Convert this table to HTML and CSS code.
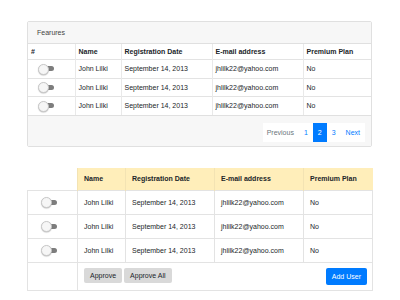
FILE: index.html
```html
<!DOCTYPE html>
<html lang="en">
  <head>
    <meta charset="UTF-8" />
    <meta name="viewport" content="width=device-width, initial-scale=1" />
    <title>Users</title>
    <link rel="stylesheet" href="styles.css">
  </head>
  <body>
    <div class="card">
      <div class="card-header">Fearures</div>
      <table class="grid features">
        <colgroup>
          <col class="c-toggle" /><col class="c-name" /><col class="c-date" /><col class="c-mail" /><col class="c-plan" />
        </colgroup>
        <thead>
          <tr><th>#</th><th>Name</th><th>Registration Date</th><th>E-mail address</th><th>Premium Plan</th></tr>
        </thead>
        <tbody>
          <tr><td><span class="switch"></span></td><td>John Lilki</td><td>September 14, 2013</td><td>jhlilk22@yahoo.com</td><td>No</td></tr>
          <tr><td><span class="switch"></span></td><td>John Lilki</td><td>September 14, 2013</td><td>jhlilk22@yahoo.com</td><td>No</td></tr>
          <tr><td><span class="switch"></span></td><td>John Lilki</td><td>September 14, 2013</td><td>jhlilk22@yahoo.com</td><td>No</td></tr>
        </tbody>
      </table>
      <div class="card-footer">
        <ul class="pager">
          <li class="disabled">Previous</li>
          <li>1</li>
          <li class="active">2</li>
          <li>3</li>
          <li>Next</li>
        </ul>
      </div>
    </div>

    <table class="grid users">
      <colgroup>
        <col class="u-toggle" /><col class="u-name" /><col class="u-date" /><col class="u-mail" /><col class="u-plan" />
      </colgroup>
      <thead>
        <tr><th class="blank"></th><th>Name</th><th>Registration Date</th><th>E-mail address</th><th>Premium Plan</th></tr>
      </thead>
      <tbody>
        <tr><td><span class="switch"></span></td><td>John Lilki</td><td>September 14, 2013</td><td>jhlilk22@yahoo.com</td><td>No</td></tr>
        <tr><td><span class="switch"></span></td><td>John Lilki</td><td>September 14, 2013</td><td>jhlilk22@yahoo.com</td><td>No</td></tr>
        <tr><td><span class="switch"></span></td><td>John Lilki</td><td>September 14, 2013</td><td>jhlilk22@yahoo.com</td><td>No</td></tr>
      </tbody>
      <tfoot>
        <tr>
          <td></td>
          <td colspan="4">
            <div class="actions">
              <button class="btn">Approve</button>
              <button class="btn">Approve All</button>
              <button class="btn primary">Add User</button>
            </div>
          </td>
        </tr>
      </tfoot>
    </table>
  </body>
</html>
```

FILE: styles.css
```css
/* base */
body {
  margin: 0;
  padding: 21px 0 0 27px;
  font-family: "Liberation Sans", Arial, sans-serif;
  font-size: 7px;
  color: #212529;
  background: #ffffff;
}

/* card */
.card {
  width: 343px;
  border: 1px solid #e0e0e0;
  border-radius: 2px;
}
.card-header {
  height: 21px;
  line-height: 21px;
  padding-left: 9px;
  background: #f7f7f7;
  border-bottom: 1px solid #e0e0e0;
  color: #444;
}
.card-footer {
  display: flex;
  justify-content: flex-end;
  padding: 7px 6px 4px;
  background: #f7f7f7;
  border-top: 1px solid #e0e0e0;
}

/* tables */
.grid {
  border-collapse: collapse;
  table-layout: fixed;
}
.grid th,
.grid td {
  padding: 0 3px;
  text-align: left;
  white-space: nowrap;
  vertical-align: middle;
}
.grid th {
  font-weight: bold;
}

.features {
  width: 343px;
}
.features th {
  height: 15px;
}
.features td {
  height: 17.5px;
  border-top: 1px solid #e3e3e3;
}
.features th + th,
.features td + td {
  border-left: 1px solid #e9e9e9;
}
.c-toggle { width: 47px; }
.c-name { width: 46px; }
.c-date { width: 91px; }
.c-mail { width: 91px; }
.c-plan { width: 68px; }

.users {
  width: 345px;
  margin-top: 21px;
}
.users th,
.users td {
  padding: 0 6px;
}
.users th {
  height: 22px;
  background: #ffeeba;
  border-left: 1px solid #f3e3b3;
}
.users th.blank {
  background: transparent;
  border-left: none;
}
.users td {
  height: 23px;
  border: 1px solid #e3e3e3;
}
.users tfoot td {
  height: 27px;
}
.u-toggle { width: 50px; }
.u-name { width: 48px; }
.u-date { width: 89px; }
.u-mail { width: 89px; }
.u-plan { width: 69px; }

/* switch */
.switch {
  position: relative;
  display: inline-block;
  width: 18px;
  height: 10px;
  margin-left: 7px;
  vertical-align: middle;
}
.switch::before {
  content: "";
  position: absolute;
  left: 7px;
  top: 2.5px;
  width: 9px;
  height: 5px;
  border-radius: 0 3px 3px 0;
  background: #7d7d7d;
}
.switch::after {
  content: "";
  position: absolute;
  left: 0;
  top: 0;
  width: 9px;
  height: 9px;
  border-radius: 50%;
  background: #f6f6f6;
  border: 0.5px solid #c8c8c8;
  box-shadow: 0 0.5px 1px rgba(0, 0, 0, 0.25);
}
.users .switch {
  margin-left: 7px;
}

/* pagination */
.pager {
  display: flex;
  margin: 0;
  padding: 0;
  list-style: none;
  background: #ffffff;
}
.pager li {
  padding: 0 5px;
  line-height: 19px;
  color: #007bff;
}
.pager li.disabled {
  color: #6c757d;
  padding-left: 4px;
}
.pager li.active {
  background: #007bff;
  color: #ffffff;
}

/* buttons */
.actions {
  display: flex;
  gap: 2px;
}
.btn {
  height: 15px;
  padding: 0 6px;
  border: none;
  border-radius: 2px;
  background: #d9d9d9;
  color: #212529;
  font-family: inherit;
  font-size: 7px;
}
.btn.primary {
  height: 17px;
  margin-left: auto;
  margin-right: -1px;
  background: #007bff;
  color: #ffffff;
}
```
